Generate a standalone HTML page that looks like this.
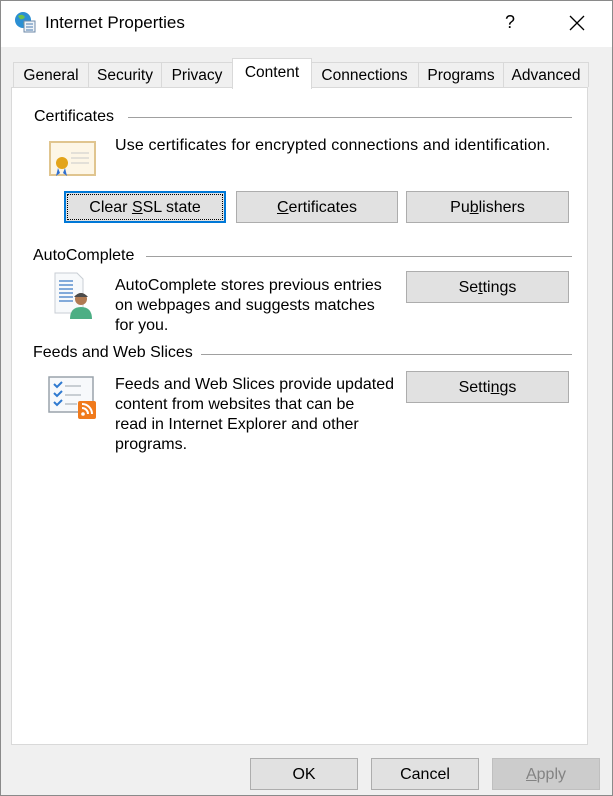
<!DOCTYPE html><html><head><style>
body{margin:0;width:613px;height:796px;background:#f0f0f0;font-family:"Liberation Sans",sans-serif;font-size:16px;color:#000;position:relative;overflow:hidden}
.a{position:absolute}
.tab{position:absolute;top:62px;height:25px;border:1px solid #d9d9d9;border-bottom:none;background:#f0f0f0;text-align:center;line-height:26px;box-sizing:border-box;font-size:15.5px}
.btn{position:absolute;height:32px;background:#e1e1e1;border:1px solid #adadad;box-sizing:border-box;text-align:center;line-height:31px}
.hl{position:absolute;height:1px;background:#a0a0a0}
</style></head><body>
<div class="a" style="left:0;top:0;width:611px;height:794px;border:1px solid #8a8a8a"></div>
<div class="a" style="left:1px;top:1px;width:611px;height:46px;background:#fff"></div>
<svg class="a" style="left:13px;top:10px" width="24" height="24"><circle cx="10" cy="10" r="8" fill="#2b8fd3"/><path d="M5 6 q4 -3 7 1 q-2 3 -5 2z M10 13 q3 -2 5 1 q-2 3 -4 2z" fill="#6cc24a"/><rect x="11" y="11" width="11" height="11" fill="#eef3f8" stroke="#6d8aa8"/><path d="M13 14h7M13 17h7M13 20h7" stroke="#4a7bb0"/></svg>
<div class="a" style="left:45px;top:13px;font-size:17px">Internet Properties</div>
<div class="a" style="left:505px;top:12px;font-size:18px">?</div>
<svg class="a" style="left:569px;top:15px" width="16" height="16"><path d="M1 1L15 15M15 1L1 15" stroke="#000" stroke-width="1.3"/></svg>
<div class="a" style="left:11px;top:87px;width:577px;height:658px;background:#fff;border:1px solid #d9d9d9;box-sizing:border-box"></div>
<div class="tab" style="left:13px;width:76px">General</div>
<div class="tab" style="left:88px;width:74px">Security</div>
<div class="tab" style="left:161px;width:72px">Privacy</div>
<div class="tab" style="left:310px;width:109px">Connections</div>
<div class="tab" style="left:418px;width:86px">Programs</div>
<div class="tab" style="left:503px;width:86px">Advanced</div>
<div class="tab" style="left:232px;top:58px;height:31px;width:80px;background:#fff;line-height:28px">Content</div>
<div class="a" style="left:34px;top:108px">Certificates</div><div class="hl" style="left:128px;top:117px;width:444px"></div>
<svg class="a" style="left:49px;top:141px" width="48" height="38"><rect x="1" y="1" width="45" height="33" fill="#fdf6e6" stroke="#e0c58f" stroke-width="2"/><path d="M22 12h18M22 17h18M22 22h18" stroke="#c9c9c9"/><circle cx="13" cy="22" r="6" fill="#e3a41a"/><path d="M9 27l-2 8 4-3M16 27l2 8-4-3" fill="#2f6fd0"/></svg>
<div class="a" style="left:115px;top:137px;letter-spacing:0.15px">Use certificates for encrypted connections and identification.</div>
<div class="btn" style="left:64px;top:191px;width:162px;border:2px solid #0078d7;line-height:29px"><div style="position:absolute;inset:1px;border:1px dotted #000"></div>Clear <u>S</u>SL state</div>
<div class="btn" style="left:236px;top:191px;width:162px"><u>C</u>ertificates</div>
<div class="btn" style="left:406px;top:191px;width:163px">Pu<u>b</u>lishers</div>
<div class="a" style="left:33px;top:247px">AutoComplete</div><div class="hl" style="left:146px;top:256px;width:426px"></div>
<svg class="a" style="left:53px;top:271px" width="44" height="50"><path d="M2 2h22l6 6v34H2z" fill="#f7f9fb" stroke="#c9ced4"/><path d="M6 10h14M6 14h14M6 18h14M6 22h14M6 26h14M6 30h14" stroke="#5b8fd0" stroke-width="1.5"/><circle cx="28" cy="28" r="6" fill="#b07a52"/><path d="M21 26q7-8 14 0" fill="#4b4b4b"/><path d="M17 48q0-12 11-12q11 0 11 12z" fill="#4cae84"/></svg>
<div class="a" style="left:115px;top:276px;line-height:20px">AutoComplete stores previous entries<br>on webpages and suggests matches<br>for you.</div>
<div class="btn" style="left:406px;top:271px;width:163px">Se<u>t</u>tings</div>
<div class="a" style="left:33px;top:344px">Feeds and Web Slices</div><div class="hl" style="left:201px;top:354px;width:371px"></div>
<svg class="a" style="left:48px;top:375px" width="50" height="46"><rect x="1" y="2" width="44" height="35" fill="#f7f9fb" stroke="#9aa3ab" stroke-width="1.5"/><path d="M6 9l3 3 5-5M6 18l3 3 5-5M6 27l3 3 5-5" stroke="#2f7ad0" stroke-width="2" fill="none"/><path d="M17 11h16M17 20h16M17 29h12" stroke="#9aa3ab"/><rect x="30" y="26" width="18" height="18" rx="2" fill="#f07a1c"/><circle cx="35" cy="39" r="1.8" fill="#fff"/><path d="M34 33a6 6 0 0 1 6 6M34 29a10 10 0 0 1 10 10" stroke="#fff" stroke-width="2" fill="none"/></svg>
<div class="a" style="left:115px;top:375px;line-height:20px">Feeds and Web Slices provide updated<br>content from websites that can be<br>read in Internet Explorer and other<br>programs.</div>
<div class="btn" style="left:406px;top:371px;width:163px">Setti<u>n</u>gs</div>
<div class="btn" style="left:250px;top:758px;width:108px">OK</div>
<div class="btn" style="left:371px;top:758px;width:108px">Cancel</div>
<div class="btn" style="left:492px;top:758px;width:108px;background:#cccccc;border-color:#bfbfbf;color:#838383"><u>A</u>pply</div>
</body></html>
